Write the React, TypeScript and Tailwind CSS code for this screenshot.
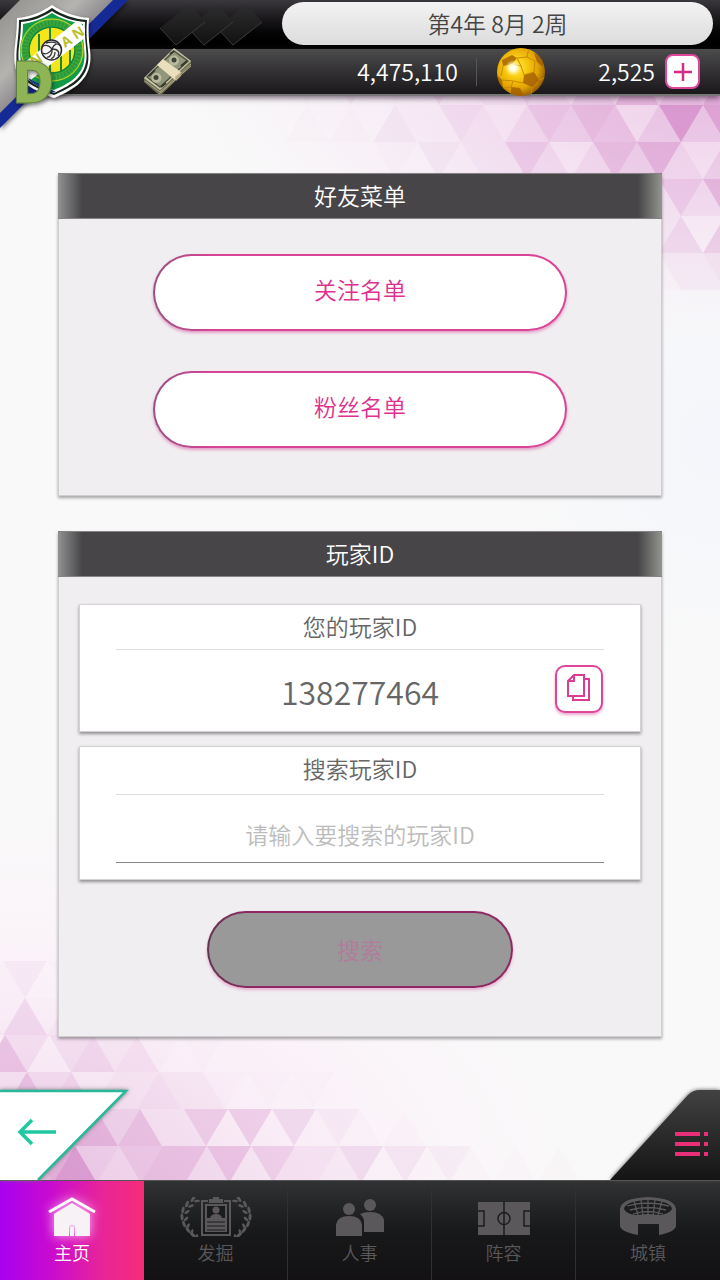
import { useState, type ReactNode } from "react";

type Row = { y: number; x: number; up: boolean; levels: string };

const SIDE = 44;
const ROW_HEIGHT = 37;

// each digit is the tint of one triangle, left to right
const topRows: Row[] = [
  { y: 68, x: 241, up: true, levels: "000102010312243142635475" },
  { y: 105, x: 219, up: false, levels: "00010102113213546514948" },
  { y: 142, x: 241, up: false, levels: "0000001021225313647314" },
  { y: 179, x: 483, up: false, levels: "000000025374" },
  { y: 216, x: 461, up: false, levels: "000000002415" },
  { y: 253, x: 483, up: false, levels: "00000001223" },
];

const bottomRows: Row[] = [
  { y: 961, x: 3, up: true, levels: "1201100" },
  { y: 998, x: -19, up: true, levels: "214121101" },
  { y: 1035, x: 5, up: true, levels: "63034231010000" },
  { y: 1072, x: -17, up: true, levels: "526341223221010100" },
  { y: 1109, x: 8, up: true, levels: "5462746225151412101000" },
  { y: 1146, x: 31, up: true, levels: "67943566362533241312101010" },
];

function Triangles({ rows }: { rows: Row[] }) {
  return (
    <>
      {rows.map((row) =>
        row.levels.split("").map((level, i) => {
          const up = row.up ? i % 2 === 0 : i % 2 === 1;
          const left = row.x + (i - 1) * (SIDE / 2) + (row.up ? 0 : SIDE / 2);
          const top = row.y;
          const bottom = row.y + ROW_HEIGHT;
          const points = up
            ? `${left},${bottom} ${left + SIDE},${bottom} ${left + SIDE / 2},${top}`
            : `${left},${top} ${left + SIDE},${top} ${left + SIDE / 2},${bottom}`;
          return (
            <polygon
              key={`${row.y}-${i}`}
              points={points}
              fill="#bd4dab"
              fillOpacity={Number(level) ** 1.4 * 0.021}
            />
          );
        })
      )}
    </>
  );
}

function Backdrop() {
  return (
    <svg
      className="absolute inset-0 w-full h-full"
      viewBox="0 0 720 1280"
      preserveAspectRatio="none"
      aria-hidden="true"
    >
      <defs>
        <radialGradient id="glowTop" gradientUnits="userSpaceOnUse" cx="720" cy="60" r="540" gradientTransform="translate(720 60) scale(1 .52) translate(-720 -60)">
          <stop offset="0" stopColor="#efcde9" />
          <stop offset=".5" stopColor="#f6e7f5" />
          <stop offset="1" stopColor="#f8eff7" stopOpacity="0" />
        </radialGradient>
        <radialGradient id="glowBottom" gradientUnits="userSpaceOnUse" cx="0" cy="1220" r="600" gradientTransform="translate(0 1220) scale(1 .68) translate(0 -1220)">
          <stop offset="0" stopColor="#efd3ea" />
          <stop offset=".5" stopColor="#faeff8" />
          <stop offset="1" stopColor="#fdf4fb" stopOpacity="0" />
        </radialGradient>
        <radialGradient id="cool" gradientUnits="userSpaceOnUse" cx="720" cy="440" r="220">
          <stop offset="0" stopColor="#f4f6fb" />
          <stop offset="1" stopColor="#f4f6fb" stopOpacity="0" />
        </radialGradient>
      </defs>
      <rect width="720" height="1280" fill="#f9f9f9" />
      <rect width="720" height="1280" fill="url(#cool)" />
      <rect width="720" height="1280" fill="url(#glowTop)" />
      <rect width="720" height="1280" fill="url(#glowBottom)" />
      <Triangles rows={topRows} />
      <Triangles rows={bottomRows} />
    </svg>
  );
}

function Crest() {
  return (
    <svg className="absolute left-0 top-0 w-[136px] h-[140px]" viewBox="0 0 136 140" role="img" aria-label="D">
      <defs>
        <linearGradient id="silver" x1="0" y1="0" x2="1" y2="1">
          <stop offset="0" stopColor="#8f8d8a" />
          <stop offset=".35" stopColor="#b5b3b0" />
          <stop offset=".6" stopColor="#77757a" />
        </linearGradient>
        <filter id="crestShadow" x="-20%" y="-20%" width="140%" height="140%">
          <feDropShadow dx="1" dy="2" stdDeviation="2" floodOpacity=".5" />
        </filter>
        <clipPath id="shieldClip">
          <path d="M52 11C61 17 73 21 85 22C84 42 88 52 86 62C83 79 69 86 54 93C38 87 22 80 19 64C17 50 21 40 21 22C33 21 43 17 52 11Z" />
        </clipPath>
      </defs>
      <path d="M0 110L110 0H128L0 128Z" fill="#182a96" filter="url(#crestShadow)" />
      <path d="M20 0H113L0 113V20Z" fill="url(#silver)" />
      <g filter="url(#crestShadow)">
        <path d="M52 5C62 12 75 17 89 18C87 42 92 52 90 63C87 83 70 91 54 98C36 91 17 83 15 65C13 50 17 40 17 18C31 17 42 12 52 5Z" fill="#fff" />
        <path d="M52 8C62 15 74 19 87 20C85 42 90 52 88 63C85 81 70 88 54 95C37 89 19 81 17 65C15 50 19 40 19 20C32 19 42 15 52 8Z" fill="#17251c" />
      </g>
      <g clipPath="url(#shieldClip)">
        <rect width="100" height="100" fill="#fff" />
        <path d="M52 13C61 19 72 22 83 24C82 42 86 52 84 62C81 77 68 84 54 90C38 85 24 78 21 64C19 50 23 40 23 24C34 22 43 19 52 13Z" fill="#119a48" />
        <circle cx="52" cy="50" r="32" fill="#3caa3c" />
        <circle cx="52" cy="50" r="27" fill="none" stroke="#16763a" strokeWidth="5" strokeDasharray="2 1.5" opacity=".4" />
        <circle cx="52" cy="50" r="23" fill="#f6e51a" stroke="#0c853a" strokeWidth="1.5" />
        <circle cx="52" cy="50" r="31" fill="none" stroke="#c5d82b" strokeWidth="1" />
        <path d="M39 34V64M50 28V74M61 52V72M70 50V64" stroke="#16883c" strokeWidth="2" />
        <path d="M20 66L78 20L90 34L28 82Z" fill="#fff" />
        <path d="M28 78L56 92L38 95Z" fill="#1a3d80" />
      </g>
      <g fontFamily="'Open Sans', sans-serif" fontWeight="700" fontSize="14" fill="#b9bf2a">
        <text x="65" y="48" transform="rotate(-32 65 48)">A</text>
        <text x="76" y="40" transform="rotate(-32 76 40)">N</text>
        <text x="34" y="67" transform="rotate(-32 34 67)">N</text>
      </g>
      <circle cx="51.500" cy="50" r="10" fill="#f6f6f6" stroke="#2a2a34" strokeWidth="1.500" />
      <path d="M52 49C48 44 44 45 42 47M52 49C50 53 45 55 43 53M52 49C54 44 58 42 60 46M52 49C58 49 60 52 58 56M52 49C53 54 49 58 47 57M46 43C50 42 54 42 56 43M55 52C55 55 53 58 51 59" stroke="#333" strokeWidth="1.300" fill="none" />
      <text
        x="12"
        y="103"
        fontFamily="'Open Sans', sans-serif"
        fontWeight="800"
        fontSize="58"
        fill="#8fb456"
        stroke="#5f7d45"
        strokeWidth="1"
        filter="url(#crestShadow)"
      >
        D
      </text>
    </svg>
  );
}

function MoneyIcon() {
  return (
    <svg className="w-12 h-12" viewBox="0 0 48 48" aria-hidden="true">
      <path d="M1 30L31 1L48 13V18L19 46L15 46L1 34Z" fill="#6f6d52" />
      <path d="M2 33L17 44L48 16M16 46L48 18" stroke="#aaa786" strokeWidth="1" fill="none" />
      <path d="M1 30L31 0L48 13L17 42Z" fill="#c6c6aa" />
      <path d="M4 29L31 3L45 13L17 39Z" fill="#92967b" stroke="#50523f" strokeWidth="1.500" />
      <circle cx="13.500" cy="30" r="5" fill="#b9baa0" />
      <circle cx="13" cy="29.500" r="2.500" fill="#3f4336" />
      <circle cx="31" cy="12.500" r="5" fill="#b9baa0" />
      <circle cx="31" cy="12" r="2.500" fill="#3f4336" />
      <path d="M6 28L12 22M23 35L18 39M27 6L31 3M38 18L44 13" stroke="#35382c" strokeWidth="2" />
      <path d="M14 17L20 11L38 24V27L32 32Z" fill="#eadfbd" />
      <path d="M32 29L38 24V28L33 33Z" fill="#b8aa86" />
    </svg>
  );
}

function GoldBall() {
  return (
    <svg className="w-12 h-12" viewBox="0 0 48 48" aria-hidden="true">
      <defs>
        <radialGradient id="gold" cx=".4" cy=".4" r=".65">
          <stop offset="0" stopColor="#ffe94e" />
          <stop offset=".3" stopColor="#fbcf14" />
          <stop offset=".7" stopColor="#e2a200" />
          <stop offset="1" stopColor="#8d5600" />
        </radialGradient>
        <radialGradient id="shine">
          <stop offset="0" stopColor="#fff" />
          <stop offset=".4" stopColor="#fffbd8" />
          <stop offset="1" stopColor="#fff3a0" stopOpacity="0" />
        </radialGradient>
        <clipPath id="ballClip">
          <circle cx="24" cy="24" r="24" />
        </clipPath>
      </defs>
      <circle cx="24" cy="24" r="24" fill="url(#gold)" />
      <g clipPath="url(#ballClip)">
        <path d="M5 12L15 7L20 10L15 16L6 18ZM27 27L37 24L42 32L35 39L26 35ZM0 27L5 32L6 40L-2 38ZM37 5L46 11V19L40 14ZM14 39L23 40L27 48H14Z" fill="#a35f00" opacity=".8" />
        <path d="M20 10L30 9L38 13L37 24L27 27L24 18L20 10M15 16L24 18M6 18L4 28M5 32L16 33L26 35M16 33L14 39M35 39L34 47M42 32L48 30M30 9L32 0M6 40L14 39" fill="none" stroke="#c88a00" strokeWidth="1" />
        <circle cx="16" cy="20" r="8" fill="url(#shine)" />
      </g>
    </svg>
  );
}

function Header() {
  return (
    <header className="relative z-10">
      <div className="flex h-[49px] pt-[2px] pl-[159px] pr-[7px] bg-linear-to-b from-[#3b383d] to-black">
        <svg className="w-[104px] h-[46px] mr-[19px]" viewBox="159 2 104 46" aria-hidden="true">
          <defs>
            <linearGradient id="diamond" x1="0" y1="0" x2="0" y2="1">
              <stop offset="0" stopColor="#2e2e30" />
              <stop offset="1" stopColor="#111" />
            </linearGradient>
          </defs>
          {[57, 28, 0].map((shift) => (
            <g key={shift}>
              <path
                d={`M${190 + shift} 4L${205 + shift} 22L${176 + shift} 45L${160 + shift} 28Z`}
                fill="url(#diamond)"
              />
              <path
                d={`M${160 + shift} 28L${176 + shift} 45L${205 + shift} 22`}
                fill="none"
                stroke="#3c3c3e"
                strokeWidth="1"
              />
            </g>
          ))}
        </svg>
        <div className="flex-1 h-[43px] rounded-full bg-linear-to-b from-[#f3f3f3] to-[#dcdcdc] text-[#444] text-center leading-[42px]">
          第4年 8月 2周
        </div>
      </div>
      <div className="flex items-center h-[47px] pl-[143px] pr-5 bg-linear-to-b from-[#4d4c4d] to-[#1a181b] border-b-2 border-[#777] shadow-[0_2px_6px_rgba(60,40,60,0.7)] text-white">
        <MoneyIcon />
        <span className="flex-1 text-right">4,475,110</span>
        <span className="w-px h-7 ml-[18px] mr-5 bg-[#555]" />
        <GoldBall />
        <span className="w-[110px] text-right">2,525</span>
        <button
          aria-label="+"
          className="flex items-center justify-center size-[35px] ml-[10px] rounded-lg bg-white border-2 border-[#e0459b] text-[#d72886]"
        >
          <svg className="size-5" viewBox="0 0 20 20" aria-hidden="true">
            <path d="M10 1V19M1 10H19" stroke="currentColor" strokeWidth="2.500" />
          </svg>
        </button>
      </div>
      <Crest />
    </header>
  );
}

function Panel({ title, children }: { title: string; children: ReactNode }) {
  return (
    <section className="bg-[#f0eef1] border border-t-0 border-[#d0ced1] shadow-[0_2px_3px_rgba(0,0,0,0.35)]">
      <h2 className="h-[46px] -mx-px leading-[42px] text-center text-white border-y border-[#858386] bg-[linear-gradient(90deg,#929292,#474548_24px,#474548_calc(100%-24px),#93968f)]">
        {title}
      </h2>
      {children}
    </section>
  );
}

function PillButton({ label }: { label: string }) {
  return (
    <button className="block w-[414px] max-w-full h-[77px] mx-auto pb-1.5 rounded-full border-2 border-transparent text-[#e0308f] [background:linear-gradient(#fff,#fff)_padding-box,linear-gradient(90deg,#985080,#d94496_15%,#d94496)_border-box] shadow-[0_2px_3px_rgba(214,64,148,0.45)]">
      {label}
    </button>
  );
}

function FriendMenu() {
  return (
    <Panel title="好友菜单">
      <div className="flex flex-col gap-10 px-5 pt-[35px] pb-[47px]">
        <PillButton label="关注名单" />
        <PillButton label="粉丝名单" />
      </div>
    </Panel>
  );
}

function CopyIcon() {
  return (
    <svg className="w-6 h-7" viewBox="0 0 24 28" fill="none" stroke="currentColor" strokeWidth="2" aria-hidden="true">
      <path d="M7 1H17V22H1V7Z" />
      <path d="M7 1V7H1" />
      <path d="M17 5H22V26H6V22" />
    </svg>
  );
}

function PlayerId() {
  const [search, setSearch] = useState("");
  const id = "138277464";

  return (
    <Panel title="玩家ID">
      <div className="px-5 pt-[27px] pb-12">
        <div className="h-[128px] px-9 bg-white border border-[#d4d2d5] shadow-[0_2px_3px_rgba(0,0,0,0.4)] text-[#666]">
          <h3 className="h-[45px] leading-[42px] text-center border-b border-[#ddd]">您的玩家ID</h3>
          <div className="grid grid-cols-[49px_1fr_49px] items-center h-[77px]">
            <span className="col-start-2 pt-1 text-center text-[32px] leading-10">{id}</span>
            <button
              aria-label="复制"
              onClick={() => navigator.clipboard?.writeText(id)}
              className="flex items-center justify-center size-12 pb-[2px] rounded-[10px] border-2 border-[#dc4799] bg-white text-[#dc3d93] shadow-[0_2px_3px_rgba(214,64,148,0.45)]"
            >
              <CopyIcon />
            </button>
          </div>
        </div>
        <div className="h-[134px] mt-[14px] px-9 bg-white border border-[#d4d2d5] shadow-[0_2px_3px_rgba(0,0,0,0.4)] text-[#666]">
          <label htmlFor="search" className="block h-12 leading-[42px] text-center border-b border-[#ddd]">
            搜索玩家ID
          </label>
          <input
            id="search"
            value={search}
            onChange={(e) => setSearch(e.target.value)}
            placeholder="请输入要搜索的玩家ID"
            className="block w-full h-[68px] pt-[11px] text-center border-b border-[#888] outline-none placeholder:text-[#bcbcbc]"
          />
        </div>
        <button
          disabled={!search}
          className="block w-[306px] max-w-full h-[77px] mt-[31px] mx-auto rounded-full border-2 border-transparent text-[#b27a9d] [background:linear-gradient(#999,#999)_padding-box,linear-gradient(90deg,#633450,#8f2862_15%,#8f2862)_border-box] shadow-[0_2px_3px_rgba(214,64,148,0.35)]"
        >
          搜索
        </button>
      </div>
    </Panel>
  );
}

function HomeIcon() {
  return (
    <svg className="w-12 h-10 drop-shadow-[0_0_6px_#ffb8f4]" viewBox="0 0 48 40" aria-hidden="true">
      <path d="M1 15L24 2L47 15" fill="none" stroke="#fff" strokeWidth="3" />
      <path d="M24 6L42 17V39H27V31Q27 28 24 28Q21 28 21 31V39H6V17Z" fill="#f6f2f6" />
      <path d="M22 39V31Q22 29 24 29Q26 29 26 31V39Z" fill="#f6f2f6" />
    </svg>
  );
}

function ScoutIcon() {
  const leaves = [
    [-23, 2, 35], [-29, 7, 20], [-33, 13, 10], [-34, 20, -5], [-32, 27, -20], [-28, 33, -35], [-23, 38, -50],
  ];
  return (
    <svg className="w-[76px] h-10" viewBox="-38 0 76 40" aria-hidden="true">
      {[1, -1].map((side) => (
        <g key={side} fill="currentColor" transform={`scale(${side} 1)`}>
          {leaves.map(([x, y, angle]) => (
            <g key={y}>
              <ellipse cx={x} cy={y} rx="1.500" ry="3.500" transform={`rotate(${angle} ${x} ${y})`} />
              <ellipse cx={x + 4} cy={y + 2} rx="1.300" ry="3" transform={`rotate(${angle + 50} ${x + 4} ${y + 2})`} />
            </g>
          ))}
        </g>
      ))}
      <path d="M-8 4H-14V38H14V4H8" fill="none" stroke="currentColor" strokeWidth="2" />
      <path d="M-7 6V2H-3V0H3V2H7V6Z" fill="currentColor" />
      <path d="M-11 7H11V35H-11Z" fill="currentColor" />
      <path d="M-9 9H9V21H-9Z" fill="#1b1c1d" />
      <circle cx="0" cy="13" r="3.500" fill="currentColor" />
      <path d="M-6 21Q-5 17 0 17Q5 17 6 21Z" fill="currentColor" />
      <path d="M-9 25H9M-9 29H9M-9 33H9" stroke="#1b1c1d" strokeWidth="1" />
    </svg>
  );
}

function StaffIcon() {
  return (
    <svg className="w-12 h-10" viewBox="0 0 48 40" fill="currentColor" aria-hidden="true">
      <circle cx="34" cy="8" r="6" />
      <path d="M24 17Q28 15 34 15Q46 15 48 23V35H28V25Q28 20 24 17Z" />
      <circle cx="13" cy="12" r="6" />
      <path d="M0 39V28Q1 19 13 19Q25 19 26 28V39Z" />
    </svg>
  );
}

function PitchIcon() {
  return (
    <svg className="w-[52px] h-10" viewBox="0 0 52 40" aria-hidden="true">
      <rect y="5" width="52" height="33" fill="currentColor" />
      <path d="M26 5V38M0 14H6V29H0M52 14H46V29H52" fill="none" stroke="#1c1d1e" strokeWidth="1.500" />
      <circle cx="26" cy="21.500" r="6" fill="none" stroke="#1c1d1e" strokeWidth="1.500" />
    </svg>
  );
}

function StadiumIcon() {
  return (
    <svg className="w-14 h-10" viewBox="0 0 56 40" aria-hidden="true">
      <path d="M0 12Q1 1 28 0Q55 1 56 12V29Q55 35 39 38V27H18V38Q1 35 0 29Z" fill="currentColor" />
      <path d="M4 12Q5 4 28 3Q51 4 52 12Q49 17 40 18L28 17L16 18Q6 17 4 12Z" fill="#1c1d1e" />
      <path d="M7 9Q27 3 49 9M10 13Q28 8 46 13M13 17Q28 12 43 17M14 4L18 18M21 3L23 18M28 3V18M35 3L33 18M42 4L38 18" stroke="currentColor" strokeWidth="1.300" fill="none" />
    </svg>
  );
}

const tabs = [
  { label: "主页", icon: <HomeIcon /> },
  { label: "发掘", icon: <ScoutIcon /> },
  { label: "人事", icon: <StaffIcon /> },
  { label: "阵容", icon: <PitchIcon /> },
  { label: "城镇", icon: <StadiumIcon /> },
];

function TabBar() {
  return (
    <nav className="grid grid-cols-5 h-[100px] bg-linear-to-b from-[#303233] via-[#18191a] to-[#131113] border-t border-[#555]">
      {tabs.map((tab, i) => (
        <button
          key={tab.label}
          className={
            i === 0
              ? "flex flex-col items-center pt-4 gap-[3px] text-[18px] leading-6 text-white bg-[linear-gradient(90deg,#a800f0,#c90bd0_35%,#e7249a_70%,#f72c78)]"
              : "flex flex-col items-center pt-4 gap-[3px] text-[18px] leading-6 text-[#5a585b] border-r border-[#303031] last:border-r-0"
          }
        >
          {tab.icon}
          {tab.label}
        </button>
      ))}
    </nav>
  );
}

function CornerButtons() {
  return (
    <div className="flex justify-between mt-auto h-[91px]">
      <button aria-label="返回">
        <svg className="w-[134px] h-[91px] drop-shadow-[0_0_2px_#777]" viewBox="0 0 134 91" aria-hidden="true">
          <path d="M0 2H127L38 91H0Z" fill="#fff" />
          <path d="M0 2H126L38 91" fill="none" stroke="#28b99b" strokeWidth="2.500" />
          <path d="M56 43H20M32 31L20 43L32 55" fill="none" stroke="#1fc7a2" strokeWidth="3.500" />
        </svg>
      </button>
      <button aria-label="菜单">
        <svg className="w-[112px] h-[91px] drop-shadow-[0_0_2px_#555]" viewBox="0 0 112 91" aria-hidden="true">
          <defs>
            <linearGradient id="corner" x1="0" y1="0" x2="0" y2="1">
              <stop offset="0" stopColor="#414141" />
              <stop offset="1" stopColor="#151415" />
            </linearGradient>
          </defs>
          <path d="M2 91L80 6Q85 1 92 1H112V91Z" fill="url(#corner)" />
          <path d="M67 45H92M96 45H100M67 55H92M96 55H100M67 65H92M96 65H100" stroke="#e83078" strokeWidth="4" />
        </svg>
      </button>
    </div>
  );
}

export default function App() {
  return (
    <div className="relative flex flex-col min-h-screen overflow-hidden text-[23px] font-[350] font-['Noto_Sans_CJK_SC',sans-serif]">
      <Backdrop />
      <div className="relative flex flex-col flex-1">
        <Header />
        <main className="flex flex-col gap-[35px] px-[58px] pt-[77px]">
          <FriendMenu />
          <PlayerId />
        </main>
        <CornerButtons />
        <TabBar />
      </div>
    </div>
  );
}
